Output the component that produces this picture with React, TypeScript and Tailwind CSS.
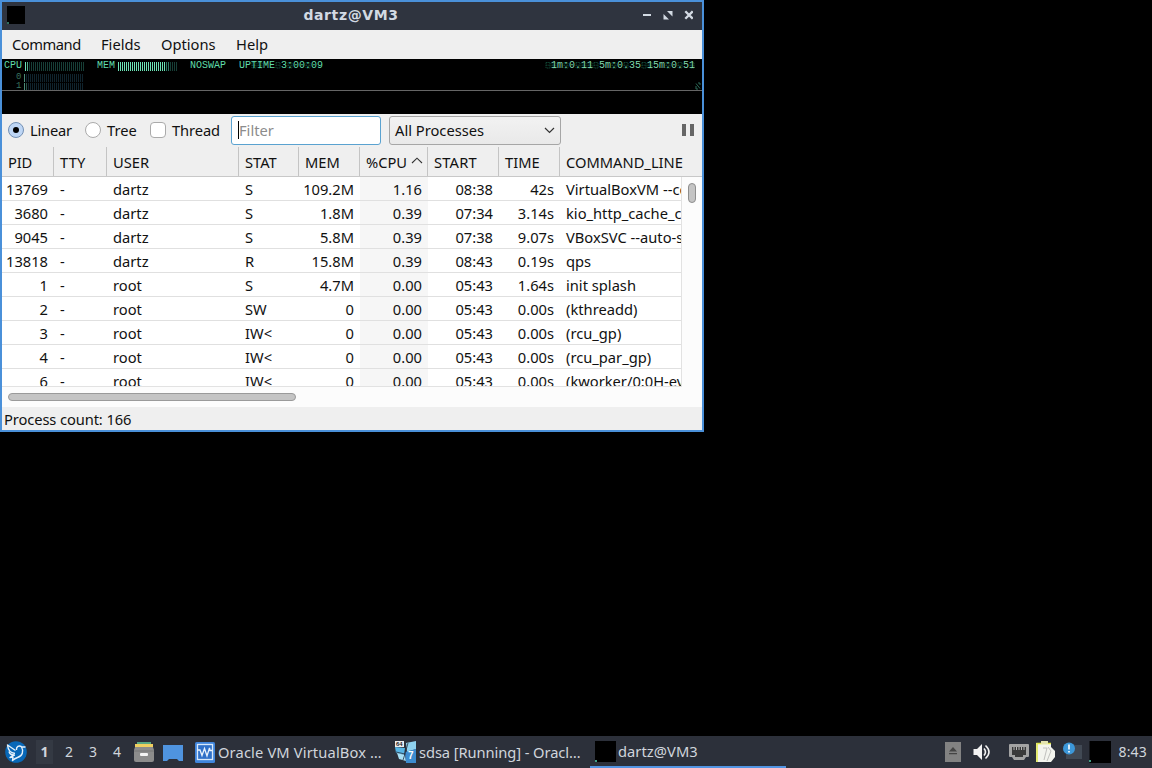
import { clsx } from "clsx";

const columns = [
  { name: "PID", width: "w-[52px]", spacing: "tracking-[-0.2px]", right: true },
  { name: "TTY", width: "w-[53px]", spacing: "tracking-[0.2px]", right: false },
  { name: "USER", width: "w-[132px]", spacing: "tracking-[0px]", right: false },
  { name: "STAT", width: "w-[60px]", spacing: "tracking-[0px]", right: false },
  { name: "MEM", width: "w-[61px]", spacing: "tracking-[0px]", right: true },
  { name: "%CPU", width: "w-[68px]", spacing: "tracking-[0px]", right: true },
  { name: "START", width: "w-[71px]", spacing: "tracking-[0.2px]", right: true },
  { name: "TIME", width: "w-[61px]", spacing: "tracking-[0px]", right: true },
  { name: "COMMAND_LINE", width: "w-[132px]", spacing: "tracking-[0px]", right: false },
];

const processes = [
  ["13769", "-", "dartz", "S", "109.2M", "1.16", "08:38", "42s", "VirtualBoxVM --co"],
  ["3680", "-", "dartz", "S", "1.8M", "0.39", "07:34", "3.14s", "kio_http_cache_c"],
  ["9045", "-", "dartz", "S", "5.8M", "0.39", "07:38", "9.07s", "VBoxSVC --auto-s"],
  ["13818", "-", "dartz", "R", "15.8M", "0.39", "08:43", "0.19s", "qps"],
  ["1", "-", "root", "S", "4.7M", "0.00", "05:43", "1.64s", "init splash"],
  ["2", "-", "root", "SW", "0", "0.00", "05:43", "0.00s", "(kthreadd)"],
  ["3", "-", "root", "IW<", "0", "0.00", "05:43", "0.00s", "(rcu_gp)"],
  ["4", "-", "root", "IW<", "0", "0.00", "05:43", "0.00s", "(rcu_par_gp)"],
  ["6", "-", "root", "IW<", "0", "0.00", "05:43", "0.00s", "(kworker/0:0H-ev"],
];

function TitleBar() {
  return (
    <div className="flex h-7 shrink-0 items-center bg-[#2f343f] pr-[9px] pb-0.5 pl-[5px] text-[#d3dae3]">
      <div className="flex h-[18px] w-[18px] items-end bg-black">
        <div className="h-[2px] w-[2px] bg-[#2f6f5f]" />
      </div>
      <div className="ml-[34px] flex-1 text-center font-['DejaVu_Sans'] text-sm leading-none font-bold tracking-[0.6px]">
        dartz@VM3
      </div>
      <svg width="50" height="12" viewBox="0 0 50 12" fill="currentColor">
        <rect x="0" y="5" width="8" height="2" />
        <path d="M24 2h5.5v5.5zM20.500 5v5.500h5.500z" />
        <path d="M42.3 2.3l7.4 7.4M49.7 2.3l-7.4 7.4" stroke="currentColor" strokeWidth="2.3" />
      </svg>
    </div>
  );
}

function MenuBar() {
  return (
    <div className="flex h-[29px] shrink-0 items-center pb-0.5 pl-2.5">
      <span className="w-[89px] tracking-[-0.45px]">Command</span>
      <span className="w-[60px]">Fields</span>
      <span className="w-[75px]">Options</span>
      <span>Help</span>
    </div>
  );
}

// Vertical tick meter: the first `lit` ticks are bright, the next `mid` half bright, the rest dim.
function Meter({ lit, mid, on, half, off, height }: {
  lit: number;
  mid: number;
  on: string;
  half: string;
  off: string;
  height: number;
}) {
  return (
    <svg width="60" height={height} className="shrink-0" shapeRendering="crispEdges">
      {Array.from({ length: 30 }, (_, i) => (
        <rect key={i} x={i * 2} width={1} height={height} fill={i < lit ? on : i < lit + mid ? half : off} />
      ))}
    </svg>
  );
}

// Readout text over unlit segments, six pixels to a character.
function Readout({ text, unlit = [] }: { text: string; unlit?: number[] }) {
  return (
    <span className="relative">
      <svg className="absolute top-px left-0" width={text.length * 6} height="8" fill="none" stroke="#104634" strokeDasharray="1.5 0.7">
        {unlit.map((i) => (
          <path key={i} d={`M${i * 6 + 1} 1.5h4v5.500h-4zM${i * 6 + 1} 4.200h4`} />
        ))}
      </svg>
      <span className="relative">{text}</span>
    </span>
  );
}

function SystemInfo() {
  return (
    <div className="flex h-[55px] shrink-0 flex-col bg-black font-['Liberation_Mono'] text-[10px] leading-[12px] text-[#5fdcaa]">
      <div className="flex h-[14px] items-center pr-[7px] pl-[2px] whitespace-pre">
        <span className="w-[21px]">CPU</span>
        <Meter lit={1} mid={1} on="#6be3b5" half="#4faf8b" off="#173f37" height={9} />
        <span className="ml-3 w-[21px]">MEM</span>
        <Meter lit={24} mid={2} on="#6be3b5" half="#2d7d67" off="#173f37" height={9} />
        <span className="ml-3">NOSWAP</span>
        <span className="ml-[13px]"><Readout text="UPTIME 3:00:09" unlit={[2, 3, 6, 8, 11]} /></span>
        <span className="ml-auto text-[#7fd8ad]">
          <Readout text=" 1m:0.11 5m:0.35 15m:0.51" unlit={[0, 1, 3, 5, 6, 7, 8, 11, 13, 16, 17, 20, 22, 24]} />
        </span>
      </div>
      <div className="flex h-[9px] items-center pl-[14px] leading-[7px]">
        <span className="w-2 text-[9px] text-[#39735f]">0</span>
        <Meter lit={1} mid={0} on="#4d8c78" half="#1a3138" off="#10242e" height={8} />
      </div>
      <div className="flex h-[9px] items-center border-b border-[#666] pl-[14px] leading-[7px]">
        <span className="w-2 text-[9px] text-[#39735f]">1</span>
        <Meter lit={1} mid={1} on="#4d8c78" half="#2a5548" off="#10242e" height={7} />
        <svg className="mr-px ml-auto" width="6" height="8" fill="none" stroke="#2c6b58">
          <path d="M1 1.5l4 5M3 1h2v2M1 4v3h2" />
        </svg>
      </div>
    </div>
  );
}

function Toolbar() {
  return (
    <div className="flex h-[33px] shrink-0 items-center pl-1.5">
      <span className="mb-0.5 flex h-4 w-4 items-center justify-center rounded-full border border-[#7390b4] bg-[#bed6f5]">
        <span className="h-1.5 w-1.5 rounded-full bg-black" />
      </span>
      <span className="mb-0.5 ml-1.5 w-[55px] tracking-[-0.2px]">Linear</span>
      <span className="mb-0.5 h-4 w-4 rounded-full border border-[#aaa] bg-white" />
      <span className="mb-0.5 ml-1.5 w-[43px]">Tree</span>
      <span className="mb-0.5 h-4 w-4 rounded-sm border border-[#aaa] bg-white" />
      <span className="mb-0.5 ml-1.5 w-[59px] tracking-[-0.1px]">Thread</span>
      <div className="flex h-[29px] w-[150px] items-center rounded-[3px] border border-[#5aa2d0] bg-white pb-0.5 pl-1.5 text-[#8c8c8c]">
        <span className="h-[18px] w-px bg-black" />
        Filter
      </div>
      <div className="ml-2 flex h-[29px] w-[172px] items-center justify-between rounded-[3px] border border-[#a6a6a6] bg-gradient-to-b from-[#f2f2f2] to-[#e9e9e9] pr-[5px] pb-0.5 pl-[5px]">
        All Processes
        <svg className="mt-0.5" width="11" height="7" fill="none" stroke="#333" strokeWidth="1.2">
          <path d="M1 1l4.5 4.5L10 1" />
        </svg>
      </div>
      <div className="mr-2 mb-0.5 ml-auto flex gap-1">
        <span className="h-3 w-1 bg-[#666]" />
        <span className="h-3 w-1 bg-[#666]" />
      </div>
    </div>
  );
}

function ProcessTable() {
  return (
    <>
      <div className="flex h-[30px] shrink-0 overflow-hidden border-b border-[#c8c8c8]">
        {columns.map((col, i) => (
          <div
            key={col.name}
            className={clsx(
              "flex shrink-0 items-center pl-1.5 whitespace-nowrap",
              col.width,
              col.spacing,
              i < 8 && "border-r border-[#c4c4c4]"
            )}
          >
            {col.name}
            {col.name === "%CPU" && (
              <svg className="mb-0.5 ml-1" width="12" height="7" fill="none" stroke="#333" strokeWidth="1.1">
                <path d="M1 6l5-4.8L11 6" />
              </svg>
            )}
          </div>
        ))}
      </div>
      <div className="flex h-[210px] shrink-0 bg-white">
        <div className="w-[680px] overflow-hidden border-r border-b border-[#e2e2e2]">
          {processes.map((row) => (
            <div key={row[0]} className="flex h-6 border-b border-[#e0e0e0] leading-6">
              {row.map((value, i) => (
                <div
                  key={i}
                  className={clsx(
                    "shrink-0 whitespace-nowrap",
                    columns[i].width,
                    columns[i].right ? "pr-1.5 text-right" : "pl-1.5",
                    i === 5 && "bg-[#f6f6f6]"
                  )}
                >
                  {value}
                </div>
              ))}
            </div>
          ))}
        </div>
        <div className="flex flex-1 justify-center bg-[#fcfcfc] pt-1.5">
          <div className="h-5 w-2 rounded-full border border-[#8e8e8e] bg-[#c4c4c4]" />
        </div>
      </div>
      <div className="h-[20px] shrink-0 bg-[#fcfcfc] pt-1.5 pl-1.5">
        <div className="h-2 w-72 rounded-full border border-[#9a9a9a] bg-[#c4c4c4]" />
      </div>
    </>
  );
}

function LubuntuIcon() {
  return (
    <svg width="22" height="22" viewBox="0 0 22 22">
      <circle cx="11" cy="11" r="10.8" fill="#0868b8" />
      <g fill="none" stroke="#e4f0fa" strokeWidth="1.4" strokeLinejoin="round">
        <path d="M10.5 9.500L2.500 4c.5 5 3 8 7.500 8.500M4 10.500c.5 2 2.500 3.500 5 3.500" />
        <path d="M20.500 6l-4-.3c-2.500-1.700-5.500-.2-5 3.300M16.500 6c2.500 4 1 9-4 10.500-2.500.8-3.500 1.500-5 3l.5-3.500-3 .5c1.500-1.500 3.500-2.500 5-2.500" />
      </g>
    </svg>
  );
}

function FilesIcon() {
  return (
    <svg width="22" height="20" viewBox="0 0 22 20">
      <path d="M4 0h14v3H4z" fill="#58a884" />
      <path d="M2 2h18v4H2z" fill="#f0d060" />
      <path d="M2 5h18l1 3v10a2 2 0 0 1-2 2H3a2 2 0 0 1-2-2V8z" fill="#8c8c8c" />
      <path d="M1 9h20" stroke="#777" />
      <rect x="7" y="11" width="8" height="3" rx="1" fill="#f3f3f3" />
    </svg>
  );
}

function DesktopIcon() {
  return (
    <svg width="20" height="17" viewBox="0 0 20 17">
      <path d="M0 0h20v16h-4l-2-2H6l-2 2H0z" fill="#4f94df" />
    </svg>
  );
}

function VirtualBoxIcon() {
  return (
    <svg width="20" height="21" viewBox="0 0 20 21">
      <rect width="20" height="21" rx="1.5" fill="#4085dc" />
      <rect x="2.5" y="2.5" width="15" height="15" fill="#2f70c8" stroke="#d8e8f8" strokeWidth="1.3" />
      <path d="M2.5 8h2.5l2 5.5 2.5-7 2.5 7.5 2.5-8 .5 2.5h2.5" fill="none" stroke="#e8f2fc" strokeWidth="1.3" />
    </svg>
  );
}

function GuestIcon() {
  return (
    <svg width="21" height="22" viewBox="0 0 21 22">
      <path d="M0 6l10 1-1 7-8-2z" fill="#56b4e4" />
      <path d="M11 2l10-2v8l-9 3z" fill="#8fd2ef" />
      <path d="M2 12l8 2 1 6-7-2z" fill="#a8dff4" />
      <path d="M10 11l11-3v14H11z" fill="#3c8cd0" />
      <path d="M1 11l9 2 3-11M10 13l-2 6" stroke="#26303f" strokeWidth="0.8" fill="none" />
      <rect width="9" height="6" fill="#eee" />
      <text x="1" y="5" fontSize="6" fontWeight="bold" fontFamily="Liberation Sans" fill="#222">64</text>
      <text x="13" y="18" fontSize="10" fontWeight="bold" fontFamily="Liberation Sans" fill="#fff">7</text>
    </svg>
  );
}

function Tray() {
  return (
    <svg width="167" height="24" viewBox="0 0 167 24">
      <rect x="0" y="2" width="16" height="20" fill="#828282" />
      <path d="M4 11.5l4-4.5 4 4.5zM4 13h8v1.2H4z" fill="#444" />
      <path d="M28.5 9h3.5l5-5v16l-5-5h-3.5z" fill="#f3f3f3" />
      <path d="M39 8.5q3 3.5 0 7M40.5 5.5q7 6.5 0 13" stroke="#f3f3f3" strokeWidth="1.6" fill="none" />
      <path d="M65 4h18q1 0 1 1v11q0 1-1 1h-2l-2 3H69l-2-3h-2q-1 0-1-1V5q0-1 1-1z" fill="#a3a3a3" />
      <path d="M67 7h14v8h-3v2h-8v-2h-3z" fill="#3a3a3a" />
      <path d="M69 7v3M71.5 7v3M74 7v3M76.5 7v3M79 7v3" stroke="#b8b8b8" />
      <path d="M91 3h15v4l4 4v6l-4 5H91z" fill="#f3f4ee" />
      <path d="M92 22V3.5h14" stroke="#dfe648" strokeWidth="1.5" fill="none" />
      <path d="M96 1h7v3h-7z" fill="#e4e4ae" />
      <path d="M98 8h4l-3 12M103 7l3 4-4 10" stroke="#c0c0bd" fill="none" />
      <rect x="121" y="5" width="16" height="14" fill="#414954" />
      <circle cx="124" cy="8.5" r="6" fill="#3c97d8" />
      <path d="M124 4.5v5M124 11v1.5" stroke="#fff" strokeWidth="1.6" />
      <rect x="144.5" y="1" width="21.5" height="22" fill="#000" />
      <path d="M144 20h2v2h-2z" fill="#41a086" />
    </svg>
  );
}

function Taskbar() {
  return (
    <div className="flex h-8 shrink-0 items-center bg-[#2c303a] text-[#d0d5dc]">
      <div className="ml-[5px]"><LubuntuIcon /></div>
      <div className="ml-[9px] flex h-8 text-center text-sm leading-8">
        <span className="my-1 w-[17px] bg-[#343943] leading-6 font-bold">1</span>
        <span className="ml-1 w-6">2</span>
        <span className="w-6">3</span>
        <span className="w-6">4</span>
      </div>
      <div className="ml-[4px]"><FilesIcon /></div>
      <div className="ml-[8px] pt-0.5"><DesktopIcon /></div>
      <div className="ml-3 flex w-[200px] items-center gap-[3px] whitespace-nowrap">
        <VirtualBoxIcon />
        <span className="tracking-[0.14px]">Oracle VM VirtualBox …</span>
      </div>
      <div className="flex w-[195px] items-center gap-[3px] whitespace-nowrap">
        <GuestIcon />
        <span className="tracking-[-0.08px]">sdsa [Running] - Oracl…</span>
      </div>
      <div className="flex h-8 w-[196px] items-center gap-[2px] border-b-2 border-[#5294e2] pl-[5px]">
        <div className="flex h-[21px] w-[21px] items-end bg-black">
          <div className="h-[2px] w-[2px] bg-[#41a086]" />
        </div>
        <span className="tracking-[0.05px]">dartz@VM3</span>
      </div>
      <div className="ml-auto"><Tray /></div>
      <span className="mr-[5px] ml-[6px] text-sm tracking-[0.2px]">8:43</span>
    </div>
  );
}

export default function App() {
  return (
    <div className="flex h-screen flex-col justify-between overflow-hidden bg-black font-['Noto_Sans',sans-serif] text-[14.7px] leading-5 text-[#111]">
      <div className="flex h-[432px] w-[704px] flex-col overflow-hidden border-2 border-[#4a90d9] bg-[#efefef]">
        <TitleBar />
        <MenuBar />
        <SystemInfo />
        <Toolbar />
        <ProcessTable />
        <div className="flex flex-1 items-center pl-[2px] tracking-[-0.1px]">Process count: 166</div>
      </div>
      <Taskbar />
    </div>
  );
}
